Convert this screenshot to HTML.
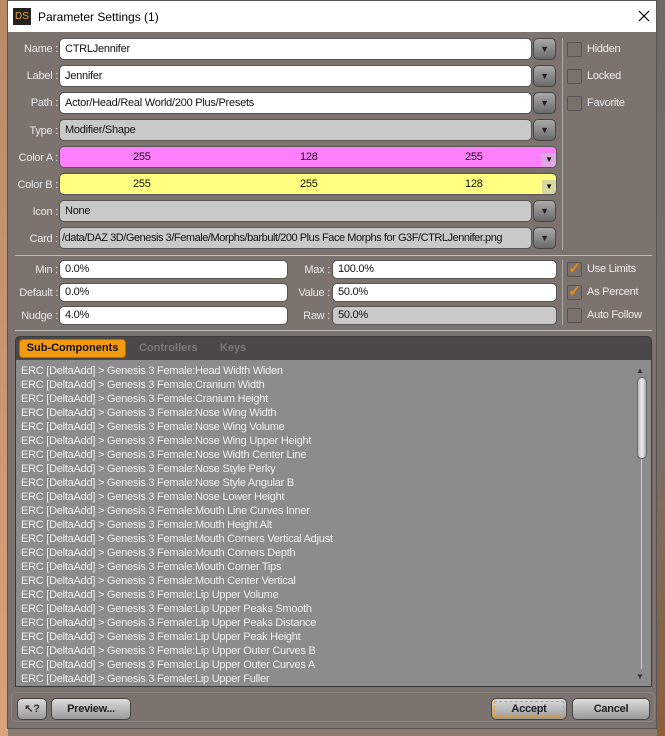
<!DOCTYPE html><html><head><style>
*{box-sizing:border-box;margin:0;padding:0}
body{width:665px;height:736px;overflow:hidden;background:#8a7a70;font-family:"Liberation Sans",sans-serif;font-size:11px;letter-spacing:-0.25px;position:relative}
.bgl{position:absolute;left:0;top:0;width:8px;height:736px;background:linear-gradient(#b88a6a,#d9a27a)}
.bgr{position:absolute;left:657px;top:0;width:8px;height:736px;background:linear-gradient(#6d6a66,#7a6f66 60%,#8b5f3a)}
.dlg{position:absolute;left:7px;top:0;width:650px;height:729px;background:#7d736e;border:1px solid #555}
.title{position:absolute;left:0;top:0;width:648px;height:31px;background:#fff;font-size:12px;color:#000;letter-spacing:0}
.title .ic{position:absolute;left:5px;top:7px;width:18px;height:17px;background:#222;color:#e0a030;font-size:10px;line-height:17px;text-align:center}
.title .t{position:absolute;left:30px;top:9px}
.a{position:absolute}
.lbl{position:absolute;color:#e8e8e8;text-align:right;width:60px}
.fld{position:absolute;background:#fff;border:1px solid #555;border-radius:5px;color:#111;padding-left:5px;line-height:20px;height:22px;white-space:nowrap;overflow:hidden}
.g{background:#c9c9c9}
.dd{position:absolute;width:23px;height:22px;border-radius:5px;border:1px solid #444;background:linear-gradient(#aaa,#6a6a6a);color:#222;text-align:center;font-size:9px;line-height:21px}
.cb{position:absolute;width:15px;height:15px;border:1px solid #5a5250;border-radius:2px;background:#7a706c}
.cbt{position:absolute;color:#eee}
.chk{color:#f08a10;font-size:15px;line-height:12px;text-align:center;font-weight:bold}
.list div{height:14px;line-height:14px;color:#f2f2f2;padding-left:5px;white-space:nowrap}
.btn{position:absolute;height:22px;border-radius:5px;border:1px solid #444;background:linear-gradient(#dcdcdc,#9a9a9a);color:#222;font-weight:bold;text-align:center;line-height:20px}
</style></head><body>
<div class="bgl"></div><div class="bgr"></div>
<div class="dlg">
<div class="title"><div class="ic">DS</div><div class="t">Parameter Settings (1)</div><svg class="a" style="left:630px;top:9px" width="12" height="12"><path d="M1 1L11 11M11 1L1 11" stroke="#000" stroke-width="1.2"/></svg></div>

<div class="lbl" style="left:-10px;top:42px">Name :</div><div class="fld" style="left:51px;top:37px;width:473px">CTRLJennifer</div><div class="dd" style="left:525px;top:37px">▼</div>
<div class="lbl" style="left:-10px;top:69px">Label :</div><div class="fld" style="left:51px;top:64px;width:473px">Jennifer</div><div class="dd" style="left:525px;top:64px">▼</div>
<div class="lbl" style="left:-10px;top:96px">Path :</div><div class="fld" style="left:51px;top:91px;width:473px">Actor/Head/Real World/200 Plus/Presets</div><div class="dd" style="left:525px;top:91px">▼</div>
<div class="lbl" style="left:-10px;top:124px">Type :</div><div class="fld g" style="left:51px;top:118px;width:473px">Modifier/Shape</div><div class="dd" style="left:525px;top:118px">▼</div>
<div class="lbl" style="left:-10px;top:151px">Color A :</div><div class="fld" style="left:51px;top:145px;width:498px;background:#ff80ff"><span class="a" style="left:73px">255</span><span class="a" style="left:240px">128</span><span class="a" style="left:405px">255</span><span class="a" style="left:482px;top:6px;width:14px;height:14px;background:#e0a8e0;font-size:8px;line-height:14px;text-align:center">▼</span></div>
<div class="lbl" style="left:-10px;top:178px">Color B :</div><div class="fld" style="left:51px;top:172px;width:498px;background:#ffff80"><span class="a" style="left:73px">255</span><span class="a" style="left:240px">255</span><span class="a" style="left:405px">128</span><span class="a" style="left:482px;top:6px;width:14px;height:14px;background:#d8d8a0;font-size:8px;line-height:14px;text-align:center">▼</span></div>
<div class="lbl" style="left:-10px;top:205px">Icon :</div><div class="fld g" style="left:51px;top:199px;width:473px">None</div><div class="dd" style="left:525px;top:199px">▼</div>
<div class="lbl" style="left:-10px;top:232px">Card :</div><div class="fld g" style="left:51px;top:226px;width:473px;padding-left:2px;letter-spacing:-0.45px">/data/DAZ 3D/Genesis 3/Female/Morphs/barbult/200 Plus Face Morphs for G3F/CTRLJennifer.png</div><div class="dd" style="left:525px;top:226px">▼</div>

<div class="a" style="left:554px;top:37px;width:1px;height:212px;background:#aaa"></div>
<div class="cb" style="left:559px;top:41px"></div><div class="cbt" style="left:579px;top:42px">Hidden</div>
<div class="cb" style="left:559px;top:68px"></div><div class="cbt" style="left:579px;top:69px">Locked</div>
<div class="cb" style="left:559px;top:95px"></div><div class="cbt" style="left:579px;top:96px">Favorite</div>

<div class="a" style="left:7px;top:254px;width:637px;height:1px;background:#bbb"></div>

<div class="lbl" style="left:-10px;top:263px">Min :</div><div class="fld" style="left:51px;top:259px;width:229px;height:19px;line-height:17px">0.0%</div>
<div class="lbl" style="left:-10px;top:286px">Default :</div><div class="fld" style="left:51px;top:282px;width:229px;height:19px;line-height:17px">0.0%</div>
<div class="lbl" style="left:-10px;top:309px">Nudge :</div><div class="fld" style="left:51px;top:305px;width:229px;height:19px;line-height:17px">4.0%</div>
<div class="lbl" style="left:262px;top:263px">Max :</div><div class="fld" style="left:324px;top:259px;width:225px;height:19px;line-height:17px">100.0%</div>
<div class="lbl" style="left:262px;top:286px">Value :</div><div class="fld" style="left:324px;top:282px;width:225px;height:19px;line-height:17px">50.0%</div>
<div class="lbl" style="left:262px;top:309px">Raw :</div><div class="fld g" style="left:324px;top:305px;width:225px;height:19px;line-height:17px">50.0%</div>
<div class="a" style="left:554px;top:259px;width:1px;height:65px;background:#aaa"></div>
<div class="cb chk" style="left:559px;top:261px">✓</div><div class="cbt" style="left:579px;top:262px">Use Limits</div>
<div class="cb chk" style="left:559px;top:284px">✓</div><div class="cbt" style="left:579px;top:285px">As Percent</div>
<div class="cb" style="left:559px;top:307px"></div><div class="cbt" style="left:579px;top:308px">Auto Follow</div>

<div class="a" style="left:7px;top:329px;width:637px;height:1px;background:#bbb"></div>

<div class="a" style="left:7px;top:335px;width:637px;height:351px;background:#4a4848;border-radius:5px 5px 0 0;border:1px solid #3a3a3a">
<div class="a" style="left:3px;top:2px;width:107px;height:19px;background:#f39a10;border:1px solid #c06a00;border-radius:4px;color:#111;font-weight:bold;text-align:center;line-height:17px;letter-spacing:0">Sub-Components</div>
<div class="a" style="left:123px;top:5px;color:#7a7a7a;font-weight:bold;letter-spacing:0">Controllers</div>
<div class="a" style="left:204px;top:5px;color:#7a7a7a;font-weight:bold;letter-spacing:0">Keys</div>
<div class="a list" style="left:0;top:23px;width:635px;height:326px;background:#8c8c8c;overflow:hidden;padding-top:4px">
<div>ERC [DeltaAdd] &gt; Genesis 3 Female:Head Width Widen</div>
<div>ERC [DeltaAdd] &gt; Genesis 3 Female:Cranium Width</div>
<div>ERC [DeltaAdd] &gt; Genesis 3 Female:Cranium Height</div>
<div>ERC [DeltaAdd] &gt; Genesis 3 Female:Nose Wing Width</div>
<div>ERC [DeltaAdd] &gt; Genesis 3 Female:Nose Wing Volume</div>
<div>ERC [DeltaAdd] &gt; Genesis 3 Female:Nose Wing Upper Height</div>
<div>ERC [DeltaAdd] &gt; Genesis 3 Female:Nose Width Center Line</div>
<div>ERC [DeltaAdd] &gt; Genesis 3 Female:Nose Style Perky</div>
<div>ERC [DeltaAdd] &gt; Genesis 3 Female:Nose Style Angular B</div>
<div>ERC [DeltaAdd] &gt; Genesis 3 Female:Nose Lower Height</div>
<div>ERC [DeltaAdd] &gt; Genesis 3 Female:Mouth Line Curves Inner</div>
<div>ERC [DeltaAdd] &gt; Genesis 3 Female:Mouth Height Alt</div>
<div>ERC [DeltaAdd] &gt; Genesis 3 Female:Mouth Corners Vertical Adjust</div>
<div>ERC [DeltaAdd] &gt; Genesis 3 Female:Mouth Corners Depth</div>
<div>ERC [DeltaAdd] &gt; Genesis 3 Female:Mouth Corner Tips</div>
<div>ERC [DeltaAdd] &gt; Genesis 3 Female:Mouth Center Vertical</div>
<div>ERC [DeltaAdd] &gt; Genesis 3 Female:Lip Upper Volume</div>
<div>ERC [DeltaAdd] &gt; Genesis 3 Female:Lip Upper Peaks Smooth</div>
<div>ERC [DeltaAdd] &gt; Genesis 3 Female:Lip Upper Peaks Distance</div>
<div>ERC [DeltaAdd] &gt; Genesis 3 Female:Lip Upper Peak Height</div>
<div>ERC [DeltaAdd] &gt; Genesis 3 Female:Lip Upper Outer Curves B</div>
<div>ERC [DeltaAdd] &gt; Genesis 3 Female:Lip Upper Outer Curves A</div>
<div>ERC [DeltaAdd] &gt; Genesis 3 Female:Lip Upper Fuller</div>
<div class="a" style="left:620px;top:4px;color:#333;font-size:8px;padding:0">▲</div>
<div class="a" style="left:621px;top:17px;width:10px;height:82px;border-radius:5px;background:linear-gradient(90deg,#bbb,#eee,#aaa);border:1px solid #666;padding:0"></div>
<div class="a" style="left:625px;top:99px;width:1px;height:210px;background:#ccc;padding:0"></div>
<div class="a" style="left:620px;top:310px;color:#333;font-size:8px;padding:0">▼</div>
</div></div>

<div class="a" style="left:3px;top:691px;width:644px;height:30px;border:1px solid #8e8580;border-radius:5px"></div>
<div class="btn" style="left:9px;top:697px;width:30px;color:#333">↖?</div>
<div class="btn" style="left:43px;top:697px;width:80px">Preview...</div>
<div class="btn" style="left:483px;top:697px;width:76px"><div style="margin:2px;border:1px dashed #f39a10;line-height:14px">Accept</div></div>
<div class="btn" style="left:564px;top:697px;width:78px">Cancel</div>
</div>
</body></html>
